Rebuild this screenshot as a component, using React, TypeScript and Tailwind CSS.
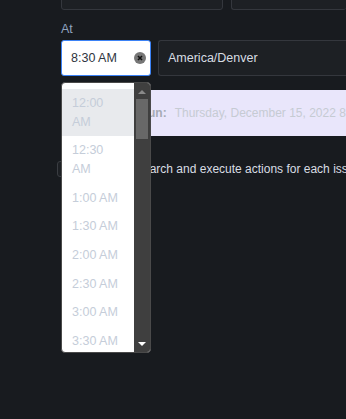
import * as React from "react";

const times = [
  "12:00 AM",
  "12:30 AM",
  "1:00 AM",
  "1:30 AM",
  "2:00 AM",
  "2:30 AM",
  "3:00 AM",
  "3:30 AM",
  "4:00 AM",
];

function TimeDropdown() {
  return (
    <div className="absolute left-0 top-[42px] z-10 flex h-[271px] w-[90px] overflow-hidden rounded-[4px] border border-[#4a4a4a] bg-white">
      <div className="flex-1 overflow-hidden pt-[6px]">
        {times.map((t, i) => (
          <div
            key={t}
            className={[
              "py-[5px] pl-[10px] pr-[12px] text-[12.5px] leading-[18.67px] text-[#c5cdd9]",
              i === 0 ? "bg-[#e8eaed]" : "",
            ].join(" ")}
          >
            {t}
          </div>
        ))}
      </div>
      {/* native-looking scrollbar */}
      <div className="flex w-[16px] flex-col items-center bg-[#3f3f3f]">
        <div className="flex h-[16px] items-center justify-center">
          <svg width="8" height="5" viewBox="0 0 8 5">
            <path d="M0 5 L4 1 L8 5 Z" fill="#8a8a8a" />
          </svg>
        </div>
        <div className="h-[40px] w-[12px] bg-[#686868]" />
        <div className="flex-1" />
        <div className="flex h-[16px] items-center justify-center">
          <svg width="8" height="5" viewBox="0 0 8 5">
            <path d="M0 0 L4 4 L8 0 Z" fill="#ffffff" />
          </svg>
        </div>
      </div>
    </div>
  );
}

export default function App() {
  return (
    <div
      className="h-[419px] w-[346px] overflow-hidden bg-[#181b1f] pl-[61px]"
      style={{ fontFamily: '"Liberation Sans", Arial, sans-serif' }}
    >
      <div className="-mt-[27px] flex gap-[8px]">
        <div className="h-[37px] w-[162px] rounded-[3px] border border-[#34373d] bg-[#1d2024]" />
        <div className="h-[37px] flex-1 rounded-[3px] border border-r-0 border-[#34373d] bg-[#1d2024]" />
      </div>

      <div className="mt-[11px] text-[12.5px] leading-[16px] text-[#8fa3bf]">At</div>

      <div className="relative mt-[3px] flex gap-[7px]">
        <div className="flex h-[36px] w-[90px] items-center justify-between rounded-[3px] border border-[#3b82f6] bg-white pl-[9px] pr-[4px]">
          <span className="text-[12.5px] text-[#2f3540]">8:30 AM</span>
          <span className="flex h-[12px] w-[12px] items-center justify-center rounded-full bg-[#767676]">
            <svg width="6" height="6" viewBox="0 0 6 6">
              <path d="M1 1 L5 5 M5 1 L1 5" stroke="#111" strokeWidth="1.6" />
            </svg>
          </span>
        </div>
        <div className="flex h-[36px] flex-1 items-center rounded-l-[3px] border border-r-0 border-[#34373d] bg-[#1d2024] pl-[9px]">
          <span className="text-[12.5px] text-[#d7dce2]">America/Denver</span>
        </div>
        <TimeDropdown />
      </div>

      <div className="mt-[14px] flex h-[46px] items-center whitespace-nowrap bg-[#e9e6fb] pl-[27px] text-[12px]">
        <span className="mr-[8px] h-[18px] w-[18px] shrink-0 rounded-full border-2 border-[#b3b8c2]" />
        <span className="mr-[8px] font-bold text-[#a6abb4]">Next run:</span>
        <span className="text-[#c6cbd3]">Thursday, December 15, 2022 8:30 AM</span>
      </div>

      <div className="-ml-[4px] mt-[24px] flex items-center gap-[18px] whitespace-nowrap">
        <span className="h-[16px] w-[16px] shrink-0 rounded-[3px] border border-[#3a3d42] bg-[#1d2024]" />
        <span className="text-[12px] text-[#d8dde3]">
          Perform search and execute actions for each issue
        </span>
      </div>
    </div>
  );
}
